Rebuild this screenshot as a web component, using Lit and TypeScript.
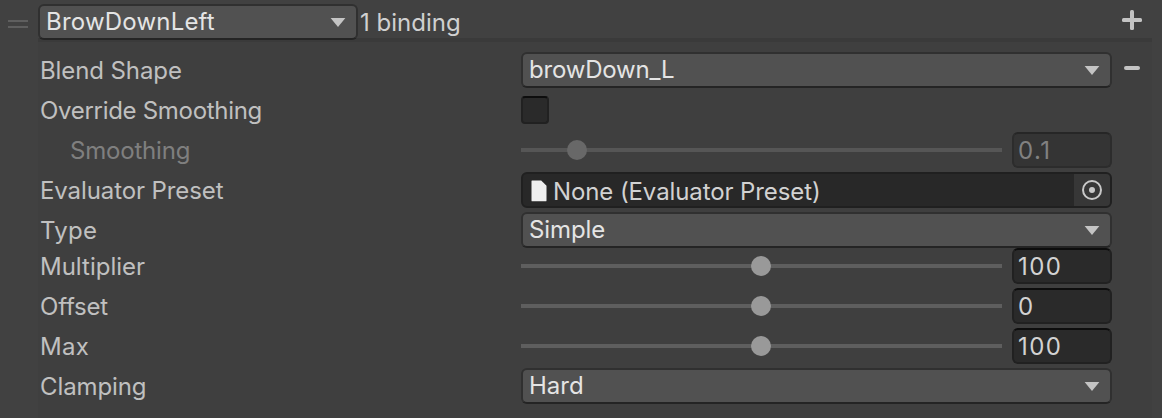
import { LitElement, html, css } from "lit";
import { customElement, property } from "lit/decorators.js";

@customElement("ui-dropdown")
class UiDropdown extends LitElement {
  @property() value = "";

  static styles = css`
    :host {
      display: flex;
      align-items: center;
      justify-content: space-between;
      box-sizing: border-box;
      height: 36px;
      padding: 0 10px 0 6px;
      border: 2px solid #303030;
      border-bottom-color: #242424;
      border-radius: 6px;
      background: #515151;
      color: #e4e4e4;
    }
    .value {
      line-height: 32px;
    }
    .arrow {
      display: block;
      width: 16px;
      height: 10px;
      fill: #c4c4c4;
    }
  `;

  render() {
    return html`
      <span class="value">${this.value}</span>
      <svg class="arrow" viewBox="0 0 16 10"><path d="M0.6 1H15.4L8 10Z" /></svg>
    `;
  }
}

@customElement("ui-slider")
class UiSlider extends LitElement {
  @property() value = "";
  @property({ type: Number }) position = 50;
  @property({ type: Boolean, reflect: true }) disabled = false;

  static styles = css`
    :host {
      display: flex;
      align-items: center;
      gap: 10px;
      height: 36px;
    }
    .track {
      position: relative;
      flex: 1;
      height: 4px;
      background: #5e5e5e;
    }
    .thumb {
      position: absolute;
      top: -8px;
      width: 20px;
      height: 20px;
      margin-left: -10px;
      border-radius: 50%;
      background: #999999;
    }
    .number {
      box-sizing: border-box;
      width: 100px;
      height: 36px;
      padding: 1px 0 0 4px;
      border: 2px solid #212121;
      border-top-color: #0d0d0d;
      border-radius: 6px;
      background: #2a2a2a;
      color: #d2d2d2;
      line-height: 32px;
      letter-spacing: 1.4px;
    }
    :host([disabled]) .track {
      background: #565656;
    }
    :host([disabled]) .thumb {
      background: #686868;
    }
    :host([disabled]) .number {
      border-color: #2c2c2c;
      border-top-color: #262626;
      background: #343434;
      color: #818181;
    }
  `;

  render() {
    return html`
      <div class="track"><div class="thumb" style="left:${this.position}%"></div></div>
      <div class="number">${this.value}</div>
    `;
  }
}

@customElement("ui-object-field")
class UiObjectField extends LitElement {
  @property() value = "";

  static styles = css`
    :host {
      display: flex;
      box-sizing: border-box;
      height: 36px;
      border: 2px solid #202020;
      border-radius: 6px;
      background: #282828;
      color: #d2d2d2;
      overflow: hidden;
    }
    .file {
      flex: none;
      width: 16px;
      height: 22px;
      margin: 6px 6px 0 8px;
      fill: #efefef;
    }
    .value {
      flex: 1;
      line-height: 32px;
      padding-top: 2px;
    }
    .picker {
      display: grid;
      place-items: center;
      width: 36px;
      background: #373737;
    }
    .target {
      width: 20px;
      height: 20px;
      fill: #c8c8c8;
    }
    .ring {
      fill: none;
      stroke: #c8c8c8;
      stroke-width: 2;
    }
  `;

  render() {
    return html`
      <svg class="file" viewBox="0 0 16 22">
        <path d="M1 0.4H10.2L15.5 5.8V20.4Q15.5 21.3 14.6 21.3H1.4Q0.5 21.3 0.5 20.4V0.9Q0.5 0.4 1 0.4Z" />
      </svg>
      <span class="value">${this.value}</span>
      <div class="picker">
        <svg class="target" viewBox="0 0 20 20">
          <circle class="ring" cx="10" cy="10" r="9" />
          <circle cx="10" cy="10" r="3" />
        </svg>
      </div>
    `;
  }
}

@customElement("app-root")
class AppRoot extends LitElement {
  static styles = css`
    :host {
      display: block;
      box-sizing: border-box;
      width: 1162px;
      height: 418px;
      background: #414141;
      color: #c0c0c0;
      font: 400 24px/38px Inter, sans-serif;
      letter-spacing: -0.1px;
      white-space: nowrap;
      overflow: hidden;
    }
    .header {
      display: flex;
      height: 38px;
    }
    .grip {
      display: grid;
      align-content: start;
      gap: 4px;
      width: 20px;
      padding: 20px 11px 0 8px;
    }
    .line {
      height: 2px;
      background: #5f5f5f;
    }
    .name {
      position: relative;
      width: 320px;
      margin-top: 4px;
      margin-left: -1px;
      letter-spacing: 0.2px;
    }
    .count {
      flex: 1;
      padding: 4px 0 0 2px;
      color: #d0d0d0;
      letter-spacing: 0;
    }
    .add {
      width: 20px;
      height: 20px;
      margin: 10px 20px 0 0;
      fill: #c4c4c4;
    }
    .body {
      box-sizing: border-box;
      height: 380px;
      margin: 0 10px 0 38px;
      padding: 10px 0 0 2px;
      border-top: 4px solid #3a3a3a;
      background: #3f3f3f;
    }
    .row {
      display: grid;
      grid-template-columns: 481px 591px 28px;
      height: 36px;
      margin-bottom: 4px;
    }
    .tight {
      margin-bottom: 0;
    }
    .indented {
      padding-left: 30px;
      color: #7f7f7f;
    }
    .tighter {
      letter-spacing: -0.3px;
    }
    .narrow {
      letter-spacing: -0.2px;
    }
    .wide {
      letter-spacing: 0.3px;
    }
    .even {
      letter-spacing: 0;
    }
    .checkbox {
      box-sizing: border-box;
      width: 28px;
      height: 28px;
      margin-top: 4px;
      border: 2px solid #212121;
      border-top-color: #0d0d0d;
      border-radius: 4px;
      background: #2a2a2a;
    }
    .remove {
      width: 16px;
      height: 4px;
      margin: 14px 0 0 12px;
      border-radius: 2px;
      background: #c4c4c4;
    }
  `;

  render() {
    return html`
      <div class="header">
        <div class="grip"><div class="line"></div><div class="line"></div></div>
        <ui-dropdown class="name" value="BrowDownLeft"></ui-dropdown>
        <span class="count">1 binding</span>
        <svg class="add" viewBox="0 0 20 20">
          <rect x="8" y="0" width="4" height="20" rx="1.5" />
          <rect x="0" y="8" width="20" height="4" rx="1.5" />
        </svg>
      </div>
      <div class="body">
        <div class="row">
          <span>Blend Shape</span>
          <ui-dropdown class="narrow" value="browDown_L"></ui-dropdown>
          <div class="remove"></div>
        </div>
        <div class="row">
          <span class="tighter">Override Smoothing</span>
          <div class="checkbox"></div>
        </div>
        <div class="row">
          <span class="indented narrow">Smoothing</span>
          <ui-slider disabled value="0.1" .position=${11.6}></ui-slider>
        </div>
        <div class="row">
          <span>Evaluator Preset</span>
          <ui-object-field value="None (Evaluator Preset)"></ui-object-field>
        </div>
        <div class="row tight">
          <span class="wide">Type</span>
          <ui-dropdown value="Simple"></ui-dropdown>
        </div>
        ${[
          ["Multiplier", "100", "even"],
          ["Offset", "0", "narrow"],
          ["Max", "100", "wide"],
        ].map(
          ([label, value, spacing]) => html`
            <div class="row">
              <span class=${spacing}>${label}</span>
              <ui-slider value=${value} .position=${49.9}></ui-slider>
            </div>
          `
        )}
        <div class="row">
          <span>Clamping</span>
          <ui-dropdown class="even" value="Hard"></ui-dropdown>
        </div>
      </div>
    `;
  }
}
